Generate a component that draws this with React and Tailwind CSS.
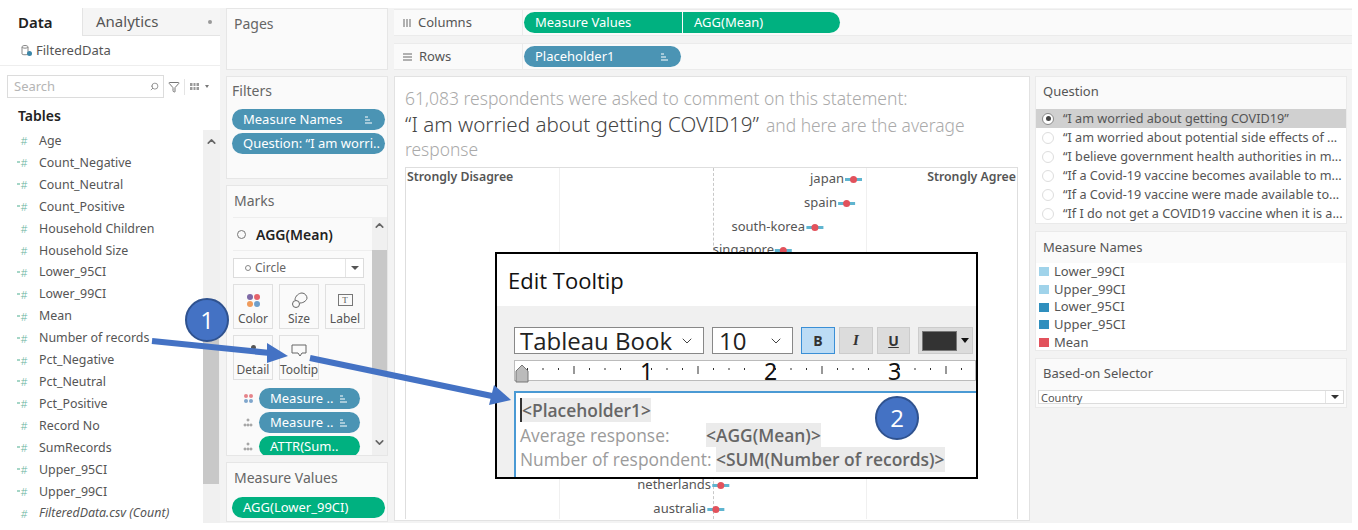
import { ChevronUp, ChevronDown, Search, Filter } from "lucide-react";

const fields = [
  "Age", "Count_Negative", "Count_Neutral", "Count_Positive", "Household Children", "Household Size",
  "Lower_95CI", "Lower_99CI", "Mean", "Number of records", "Pct_Negative", "Pct_Neutral",
  "Pct_Positive", "Record No", "SumRecords", "Upper_95CI", "Upper_99CI",
];

const questions = [
  "“I am worried about getting COVID19”",
  "“I am worried about potential side effects of ...",
  "“I believe government health authorities in m...",
  "“If a Covid-19 vaccine becomes available to m...",
  "“If a Covid-19 vaccine were made available to...",
  "“If I do not get a COVID19 vaccine when it is a...",
];

const legend = [
  ["Lower_99CI", "bg-[#a0d3ea]"],
  ["Upper_99CI", "bg-[#a0d3ea]"],
  ["Lower_95CI", "bg-[#2f8fbe]"],
  ["Upper_95CI", "bg-[#2f8fbe]"],
  ["Mean", "bg-[#e2525c]"],
];

// dots of the chart, x/y relative to the plot frame
const points = [
  { name: "japan", x: 448, y: 11 },
  { name: "spain", x: 441, y: 35 },
  { name: "south-korea", x: 409, y: 59 },
  { name: "singapore", x: 378, y: 82 },
  { name: "netherlands", x: 315, y: 317 },
  { name: "australia", x: 310, y: 341 },
];

function Hash({ light }) {
  return (
    <span className="relative w-[12px] text-center text-[11px] font-light leading-none text-[#6bb5a0]">
      {light && <span className="absolute left-[-1px] top-[4px] h-[2px] w-[3px] bg-[#a5d6c7]" />}
      #
    </span>
  );
}

function Pill({ children, color = "blue", sort, className = "" }) {
  const bg = color === "blue" ? "bg-[#4b94b4]" : "bg-[#00b180]";
  return (
    <div className={`flex h-[21px] items-center justify-between rounded-full pl-[11px] pr-[12px] text-[13px] leading-none text-white ${bg} ${className}`}>
      <span className="whitespace-nowrap">{children}</span>
      {sort && <SortIcon />}
    </div>
  );
}

function SortIcon() {
  return (
    <svg width="9" height="8" viewBox="0 0 9 8" className="shrink-0">
      <path d="M1 1h3M1 4h5M1 7h7" stroke="#fff" strokeWidth="1" />
    </svg>
  );
}

function MarkButton({ label, children }) {
  return (
    <div className="flex h-[45px] w-[40px] flex-col items-center justify-between border border-[#e0e0e0] pb-[2px] pt-[6px] text-[12px] leading-[14px] text-[#555]">
      <div className="flex h-[18px] items-center">{children}</div>
      <span>{label}</span>
    </div>
  );
}

function Sidebar() {
  return (
    <div className="relative w-[220px] shrink-0 bg-white text-[#555]">
      <div className="flex h-[28px] text-[15px] leading-none">
        <div className="flex w-[82px] items-center pl-[18px] font-semibold text-[#222]">Data</div>
        <div className="flex flex-1 items-center justify-between border-b border-l border-[#e4e4e4] bg-[#f5f5f5] pl-[13px] pr-[8px]">
          <span>Analytics</span>
          <span className="h-[4px] w-[4px] rounded-full bg-[#999]" />
        </div>
      </div>
      <div className="flex h-[30px] items-center gap-[3px] border-b border-[#eeeeee] pl-[20px] text-[13px]">
        <svg width="13" height="13" viewBox="0 0 13 13">
          <path d="M2 3c0-2 6-2 6 0v7c0 1-6 1-6 0zM2 3c0 1.500 6 1.500 6 0" fill="none" stroke="#888" />
          <circle cx="9.500" cy="9.500" r="2.500" fill="#3b86a8" />
        </svg>
        FilteredData
      </div>
      <div className="mt-[9px] flex items-center pl-[7px]">
        <div className="flex h-[23px] w-[157px] items-center justify-between border border-[#dcdcdc] pl-[6px] pr-[4px] text-[13px] text-[#b5b5b5]">
          Search
          <Search size={9} className="-scale-x-100 text-[#777]" />
        </div>
        <Filter size={12} className="ml-[4px] text-[#777]" />
        <span className="ml-[4px] h-[16px] w-px bg-[#e4e4e4]" />
        <svg width="10" height="7" viewBox="0 0 10 7" className="ml-[5px]">
          <path d="M0 0h9v7H0z" fill="#999" />
          <path d="M3 0v7M6 0v7M0 3.500h9" stroke="#fff" />
        </svg>
        <span className="ml-[5px] h-0 w-0 border-x-[2.500px] border-t-[3px] border-x-transparent border-t-[#777]" />
      </div>
      <div className="mt-[8px] pl-[18px] text-[14px] font-semibold leading-[20px] text-[#222]">Tables</div>
      <div className="mt-[4px] flex h-[394px] overflow-hidden">
        <div className="flex-1 pl-[18px] text-[12.400px] leading-[21.900px]">
          {fields.map((f, i) => (
            <div key={f} className="flex items-center">
              <Hash light={![0, 4, 5, 13].includes(i)} />
              <span className="ml-[9px]">{f}</span>
            </div>
          ))}
          <div className="flex items-center italic">
            <Hash />
            <span className="ml-[9px]">FilteredData.csv (Count)</span>
          </div>
        </div>
        <div className="flex w-[17px] flex-col bg-[#f0f0f0] pr-px">
          <ChevronUp size={13} strokeWidth={3} className="ml-[2px] mt-[5px] text-[#666]" />
          <div className="mt-[191px] h-[145px] w-full bg-[#c8c8c8]" />
        </div>
      </div>
    </div>
  );
}

function CardsColumn() {
  return (
    <div className="ml-[6px] flex w-[162px] shrink-0 flex-col gap-[6px] text-[#666]">
      <div className="h-[62px] border border-[#e6e6e6] bg-[#fafafa] px-[7px] pt-[4px] text-[14px]">Pages</div>
      <div className="h-[103px] border border-[#e6e6e6] bg-[#fafafa] pl-[5px] pr-[2px] pt-[3px] text-[14px]">
        Filters
        <div className="mt-[8px] flex flex-col gap-[3px]">
          <Pill sort>Measure Names</Pill>
          <Pill>Question: “I am worri..</Pill>
        </div>
      </div>
      <div className="h-[271px] overflow-hidden border border-[#e6e6e6] bg-[#fafafa]">
        <div className="h-[31px] px-[7px] pt-[4px] text-[14px]">Marks</div>
        <div className="flex h-[238px]">
          <div className="w-[145px] shrink-0 pl-[6px]">
            <div className="flex h-[34px] items-center border-y border-[#eeeeee] pl-[4px] text-[14px] font-semibold text-[#222]">
              <span className="mr-[10px] h-[9px] w-[9px] rounded-full border border-[#777]" />
              AGG(Mean)
            </div>
            <div className="mt-[7px] flex h-[20px] w-[131px] items-center border border-[#dcdcdc] bg-white pl-[11px] text-[12px] text-[#666]">
              <span className="mr-[4px] h-[6px] w-[6px] rounded-full border border-[#888]" />
              Circle
              <span className="ml-auto flex h-full w-[18px] items-center justify-center border-l border-[#e4e4e4]">
                <span className="h-0 w-0 border-x-[4px] border-t-[4px] border-x-transparent border-t-[#555]" />
              </span>
            </div>
            <div className="mt-[6px] grid w-[132px] grid-cols-3 gap-x-[6px] gap-y-[6px]">
              <MarkButton label="Color">
                <span className="grid grid-cols-2 gap-[1px]">
                  <i className="h-[6px] w-[6px] rounded-full bg-[#7e6aa6]" />
                  <i className="h-[6px] w-[6px] rounded-full bg-[#e5636b]" />
                  <i className="h-[6px] w-[6px] rounded-full bg-[#ef9b5c]" />
                  <i className="h-[6px] w-[6px] rounded-full bg-[#6e9fcb]" />
                </span>
              </MarkButton>
              <MarkButton label="Size">
                <svg width="17" height="17" viewBox="0 0 17 17" fill="none" stroke="#666">
                  <circle cx="5" cy="12" r="3.500" />
                  <path d="M4 8c0-4 4-7 7-7s5 3 5 5-3 5-7 5" />
                </svg>
              </MarkButton>
              <MarkButton label="Label">
                <span className="flex h-[12px] w-[15px] items-center justify-center border border-[#777] font-['Liberation_Serif',serif] text-[9px] leading-none">T</span>
              </MarkButton>
              <MarkButton label="Detail">
                <span className="mb-[8px] h-[5px] w-[5px] rounded-full bg-[#555]" />
              </MarkButton>
              <MarkButton label="Tooltip">
                <svg width="16" height="14" viewBox="0 0 16 14" fill="none" stroke="#666">
                  <path d="M1 1h14v8H11l-2 3-2-3H1z" />
                </svg>
              </MarkButton>
            </div>
            <div className="mt-[8px] flex flex-col gap-[3px]">
              {[["Measure ..", "blue", true], ["Measure ..", "blue", true], ["ATTR(Sum..", "green", false]].map(([t, c, s], i) => (
                <div key={i} className="flex items-center">
                  {i === 0 ? (
                    <span className="ml-[11px] mr-[6px] grid w-[9px] grid-cols-2 gap-px">
                      <i className="h-[4px] w-[4px] rounded-full bg-[#e5838a]" />
                      <i className="h-[4px] w-[4px] rounded-full bg-[#e5838a]" />
                      <i className="h-[4px] w-[4px] rounded-full bg-[#7fa6cc]" />
                      <i className="h-[4px] w-[4px] rounded-full bg-[#7fa6cc]" />
                    </span>
                  ) : (
                    <svg width="10" height="9" viewBox="0 0 10 9" className="ml-[10px] mr-[6px]" fill="none" stroke="#777" strokeWidth="0.800">
                      <circle cx="5" cy="2" r="1" />
                      <circle cx="2" cy="7" r="1" />
                      <circle cx="5" cy="7" r="1" />
                      <circle cx="8" cy="7" r="1" />
                    </svg>
                  )}
                  <Pill color={c} sort={s} className="w-[101px]">{t}</Pill>
                </div>
              ))}
            </div>
          </div>
          <div className="flex flex-1 flex-col bg-[#f0f0f0]">
            <ChevronUp size={13} strokeWidth={3} className="ml-[1px] mt-[2px] text-[#666]" />
            <div className="mt-[18px] h-[121px] w-full bg-[#c8c8c8]" />
            <ChevronDown size={13} strokeWidth={3} className="ml-[1px] mt-auto mb-[6px] text-[#666]" />
          </div>
        </div>
      </div>
      <div className="h-[60px] overflow-hidden border border-[#e6e6e6] bg-[#fafafa] pl-[5px] pr-[2px] pt-[4px] text-[14px]">
        <div className="pl-[2px]">Measure Values</div>
        <div className="mt-[9px] flex flex-col gap-[3px]">
          <Pill color="green">AGG(Lower_99CI)</Pill>
          <Pill color="green" />
        </div>
      </div>
    </div>
  );
}

function Shelf({ icon, label, children }) {
  return (
    <div className="flex h-[27px] items-center border-y border-[#ebebeb] bg-[#fafafa] text-[13px] text-[#555]">
      <div className="flex h-full w-[129px] shrink-0 items-center gap-[7px] border-r border-[#ebebeb] pl-[9px]">
        {icon}
        {label}
      </div>
      <div className="flex pl-[1px]">{children}</div>
    </div>
  );
}

function Chart() {
  return (
    <div className="relative ml-[10px] mt-[7px] h-[352px] w-[613px] border-x border-t border-[#dedede] text-[13px] text-[#555]">
      <div className="absolute inset-y-0 left-[153px] w-px bg-[#f0f0f0]" />
      <div className="absolute inset-y-0 left-[307px] w-px border-l border-dashed border-[#c8c8c8]" />
      <div className="absolute inset-y-0 left-[460px] w-px bg-[#f0f0f0]" />
      <span className="absolute left-[1px] top-0 text-[12.300px] font-semibold text-[#555]">Strongly Disagree</span>
      <span className="absolute right-[1px] top-0 text-[12.300px] font-semibold text-[#555]">Strongly Agree</span>
      {points.map((p) => (
        <div key={p.name} className="absolute flex h-[16px] -translate-x-full -translate-y-1/2 items-center" style={{ left: p.x + 8, top: p.y }}>
          <span className="mr-[1px]">{p.name}</span>
          <span className="relative h-[3px] w-[17px] bg-[#5fb5d0]">
            <span className="absolute left-[5px] top-[-2px] h-[7px] w-[7px] rounded-full bg-[#e2525c]" />
          </span>
        </div>
      ))}
    </div>
  );
}

function RightColumn() {
  return (
    <div className="ml-[5px] flex w-[312px] shrink-0 flex-col gap-[7px] text-[#555]">
      <div className="h-[148px] border border-[#eaeaea] bg-[#fafafa]">
        <div className="h-[32px] pl-[7px] pt-[5px] text-[13px]">Question</div>
        <div className="bg-white text-[12.650px] leading-[19px]">
          {questions.map((q, i) => (
            <div key={q} className={`flex h-[19px] items-center whitespace-nowrap pl-[6px] ${i === 0 ? "bg-[#d0d0d0]" : ""}`}>
              <span className={`mr-[9px] flex h-[12px] w-[12px] shrink-0 items-center justify-center rounded-full border ${i === 0 ? "border-[#888] bg-white" : "border-[#dddddd] bg-white"}`}>
                {i === 0 && <span className="h-[5px] w-[5px] rounded-full bg-[#444]" />}
              </span>
              {q}
            </div>
          ))}
        </div>
      </div>
      <div className="h-[120px] border border-[#eaeaea] bg-white">
        <div className="flex h-[31px] items-center bg-[#fafafa] pl-[7px] text-[13px]">Measure Names</div>
        <div className="pl-[3px] text-[13px] leading-[17.700px]">
          {legend.map(([name, color]) => (
            <div key={name} className="flex items-center">
              <span className={`mr-[5px] h-[9px] w-[10px] ${color}`} />
              {name}
            </div>
          ))}
        </div>
      </div>
      <div className="h-[50px] border border-[#eaeaea] bg-[#fafafa]">
        <div className="flex h-[29px] items-center pl-[7px] text-[13px]">Based-on Selector</div>
        <div className="ml-[2px] mt-[2px] flex h-[14px] w-[306px] items-center justify-between border border-[#dcdcdc] bg-white pl-[2px] text-[11px] leading-none">
          Country
          <span className="flex h-full w-[18px] items-center justify-center border-l border-[#e4e4e4]">
            <span className="h-0 w-0 border-x-[4px] border-t-[4px] border-x-transparent border-t-[#333]" />
          </span>
        </div>
      </div>
    </div>
  );
}

function Ruler() {
  const ticks = [];
  for (let i = 0; i < 30; i++) {
    const x = 12 + i * 15.500;
    const major = i % 4 === 3;
    if (i % 8 === 7) continue;
    ticks.push(<rect key={i} x={x} y={major ? 5 : 7} width="1" height={major ? 8 : 2} fill="#333" />);
  }
  return (
    <div className="relative mt-[6px] h-[21px] border border-[#bbbbbb] bg-white text-[23px] leading-none text-[#111]">
      <svg width="460" height="21" className="absolute left-0 top-0">{ticks}</svg>
      <span className="absolute left-[125px] top-[-1px]">1</span>
      <span className="absolute left-[249px] top-[-1px]">2</span>
      <span className="absolute left-[373px] top-[-1px]">3</span>
      <svg width="14" height="19" viewBox="0 0 14 19" className="absolute left-0 top-[3px]">
        <path d="M1 7l6-6 6 6v11H1z" fill="#bbb" stroke="#777" />
      </svg>
    </div>
  );
}

function EditTooltip() {
  return (
    <div className="absolute left-[495px] top-[252px] h-[227px] w-[483px] overflow-hidden border-2 border-black bg-white">
      <div className="flex h-[52px] items-center pl-[11px] font-['Open_Sans',sans-serif] text-[22px] text-[#111]">Edit Tooltip</div>
      <div className="h-full bg-[#f0f0f0] pl-[17px] pt-[21px]">
        <div className="flex h-[27px] items-stretch font-['Open_Sans',sans-serif] text-[24px] leading-none text-[#222]">
          <div className="flex w-[190px] items-center justify-between border border-[#888] bg-white pl-[5px] pr-[8px]">
            Tableau Book
            <ChevronDown size={16} strokeWidth={1.500} className="text-[#444]" />
          </div>
          <div className="ml-[8px] flex w-[81px] items-center justify-between border border-[#888] bg-white pl-[6px] pr-[8px]">
            10
            <ChevronDown size={16} strokeWidth={1.500} className="text-[#444]" />
          </div>
          <div className="ml-[8px] flex w-[34px] items-center justify-center border border-[#3a8fd6] bg-[#bcdcf5] text-[14px] font-bold text-[#333]">B</div>
          <div className="ml-[4px] flex w-[34px] items-center justify-center border border-[#cccccc] bg-[#dcdcdc] font-['Liberation_Serif',serif] text-[15px] font-bold italic text-[#333]">I</div>
          <div className="ml-[4px] flex w-[33px] items-center justify-center border border-[#cccccc] bg-[#dcdcdc] text-[14px] font-bold text-[#333] underline">U</div>
          <div className="ml-[8px] flex w-[55px] items-center border border-[#cccccc] bg-[#dcdcdc] pl-[4px]">
            <span className="h-[18px] w-[33px] bg-[#333] ring-1 ring-[#777]" />
            <span className="ml-[5px] h-0 w-0 border-x-[4px] border-t-[5px] border-x-transparent border-t-[#111]" />
          </div>
        </div>
        <Ruler />
        <div className="mt-[10px] h-[100px] border-l-2 border-t-2 border-[#4a9ad4] bg-white pl-[4px] pt-[5px] font-['Open_Sans',sans-serif] text-[17.400px] leading-[24.500px] text-[#9b9b9b]">
          <div><span className="border-l-2 border-[#333] bg-[#ebebeb] font-semibold text-[#666]">{"<Placeholder1>"}</span></div>
          <div className="flex">
            <span className="w-[186px]">Average response:</span>
            <span className="bg-[#ebebeb] font-semibold text-[#666]">{"<AGG(Mean)>"}</span>
          </div>
          <div className="flex whitespace-nowrap">
            <span className="w-[196px]">Number of respondent:</span>
            <span className="bg-[#ebebeb] font-semibold text-[#666]">{"<SUM(Number of records)>"}</span>
          </div>
        </div>
      </div>
    </div>
  );
}

function Badge({ n, className }) {
  return (
    <div className={`absolute flex h-[44px] w-[44px] items-center justify-center rounded-full border-2 border-[#2f528f] bg-[#4472c4] font-['Open_Sans',sans-serif] text-[24px] leading-none text-white ${className}`}>
      {n}
    </div>
  );
}

export default function App() {
  return (
    <div className="relative h-[530px] w-[1358px] overflow-hidden bg-white font-['Noto_Sans',sans-serif]">
      <div className="pt-[8px]">
        <div className="flex h-[515px] w-[1352px] overflow-hidden bg-[#f3f3f3]">
          <Sidebar />
          <CardsColumn />
          <div className="ml-[6px] flex min-w-0 flex-1 flex-col pt-px">
            <Shelf
              label="Columns"
              icon={<svg width="8" height="8" viewBox="0 0 8 8"><path d="M1 0v8M4 0v8M7 0v8" stroke="#666" /></svg>}
            >
              <Pill color="green" className="w-[158px] rounded-r-none">Measure Values</Pill>
              <Pill color="green" className="ml-px w-[157px] rounded-l-none">AGG(Mean)</Pill>
            </Shelf>
            <div className="mt-[7px]">
              <Shelf
                label="Rows"
                icon={<svg width="9" height="8" viewBox="0 0 9 8"><path d="M0 1h9M0 4h9M0 7h9" stroke="#666" /></svg>}
              >
                <Pill sort className="w-[157px]">Placeholder1</Pill>
              </Shelf>
            </div>
            <div className="mt-[6px] flex flex-1">
              <div className="h-[445px] w-[636px] shrink-0 border border-[#e2e2e2] bg-white">
                <div className="pl-[10px] pt-[10px] font-['Noto_Sans',sans-serif] text-[#aaaaaa]">
                  <div className="whitespace-nowrap text-[17.500px] font-light leading-[22px]">61,083 respondents were asked to comment on this statement:</div>
                  <div className="mt-[1px] h-[28px] whitespace-nowrap leading-[28px]">
                    <span className="text-[20.600px] font-light text-[#444]">“I am worried about getting COVID19”</span>
                    <span className="ml-[7px] text-[17.400px] font-light">and here are the average</span>
                  </div>
                  <div className="text-[17.400px] font-light leading-[22px]">response</div>
                </div>
                <Chart />
              </div>
              <RightColumn />
            </div>
          </div>
        </div>
      </div>

      <EditTooltip />

      {/* annotation arrows */}
      <svg width="1358" height="530" className="pointer-events-none absolute left-0 top-0">
        <path d="M152 341L270 353" stroke="#4472c4" strokeWidth="6" />
        <path d="M267 343L288 356L267 363z" fill="#4472c4" />
        <path d="M310 358L492 396" stroke="#4472c4" strokeWidth="6" />
        <path d="M494 385L511 400L489 405z" fill="#4472c4" />
      </svg>
      <Badge n="1" className="left-[185px] top-[298px]" />
      <Badge n="2" className="left-[875px] top-[396px]" />
    </div>
  );
}
